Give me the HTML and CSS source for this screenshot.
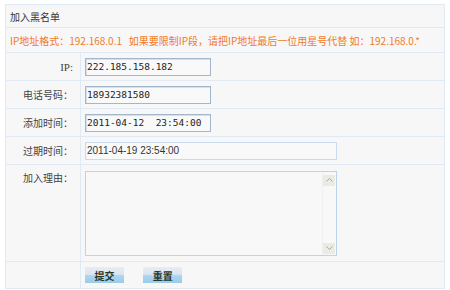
FILE: index.html
```html
<!DOCTYPE html>
<html lang="zh-CN">
<head>
<meta charset="UTF-8">
<title>加入黑名单</title>
<link rel="stylesheet" href="styles.css">
</head>
<body>
<form class="form-box">
  <table class="form">
    <tr class="head"><td colspan="2">加入黑名单</td></tr>
    <tr class="tip"><td colspan="2">IP地址格式：192.168.0.1 &nbsp; 如果要限制IP段，请把IP地址最后一位用星号代替 如：192.168.0.*</td></tr>
    <tr class="row"><th class="serif">IP:</th><td><input class="txt" type="text" value="222.185.158.182"></td></tr>
    <tr class="row"><th>电话号码：</th><td><input class="txt" type="text" value="18932381580"></td></tr>
    <tr class="row"><th>添加时间：</th><td><input class="txt" type="text" value="2011-04-12  23:54:00"></td></tr>
    <tr class="row"><th>过期时间：</th><td><input class="txt readonly" type="text" value="2011-04-19 23:54:00" readonly></td></tr>
    <tr class="reason">
      <th>加入理由：</th>
      <td>
        <div class="area">
          <textarea></textarea>
          <div class="scroll">
            <span><svg width="7" height="4" viewBox="0 0 7 4"><path d="M0.5 3.5 L3.5 0.5 L6.5 3.5" fill="none" stroke="#a9a9a0" stroke-width="1"/></svg></span>
            <span><svg width="7" height="4" viewBox="0 0 7 4"><path d="M0.5 0.5 L3.5 3.5 L6.5 0.5" fill="none" stroke="#a9a9a0" stroke-width="1"/></svg></span>
          </div>
        </div>
      </td>
    </tr>
    <tr class="btns">
      <th></th>
      <td>
        <button type="button" class="btn">提交</button>
        <button type="reset" class="btn">重置</button>
      </td>
    </tr>
  </table>
</form>
</body>
</html>
```

FILE: styles.css
```css
*{
  box-sizing: border-box;
}
body{
  margin: 4px 5px 0;
  background-color: #fff;
  font: 10px "Noto Sans CJK SC", sans-serif;
  color: #333;
}
.form{
  width: 440px;
  border-collapse: collapse;
  background-color: #f7f7f7;
  border: 1px solid #d6e4f2;
}
.form td,
.form th{
  border: 1px solid #e0eaf5;
  padding: 0 4px;
}
.form th{
  width: 75px;
  padding-right: 7px;
  text-align: right;
  font-weight: normal;
  color: #444;
}
.form th.serif{
  font: 11px "Liberation Serif", serif;
}
.head td{
  height: 23px;
}
.tip td{
  height: 25px;
  color: #f07a28;
}
.row td,
.row th{
  height: 28px;
}
.txt{
  display: block;
  width: 126px;
  height: 18px;
  padding: 0 1px;
  border: 1px solid #a3b7cc;
  box-shadow: inset 1px 1px 0 #d4e0ec;
  background-color: #f9f9f9;
  font: 9.5px "DejaVu Sans Mono", monospace;
  color: #222;
  outline: none;
}
.txt.readonly{
  width: 252px;
  border-color: #c8dbee;
  box-shadow: none;
  font: 10px "Liberation Sans", sans-serif;
  color: #333;
}
.reason th{
  vertical-align: top;
  padding-top: 5px;
}
.reason td{
  height: 97px;
}
.area{
  display: flex;
  width: 252px;
  height: 85px;
  border: 1px solid #bcd3ea;
  background-color: #f8f8f8;
}
.area textarea{
  flex: 1;
  border: 0;
  background: transparent;
  resize: none;
  outline: none;
}
.scroll{
  width: 14px;
  display: flex;
  flex-direction: column;
  justify-content: space-between;
  padding: 3px 1px 1px 0;
  border-left: 1px solid #f0f0ee;
}
.scroll span{
  display: flex;
  align-items: center;
  justify-content: center;
  height: 11px;
  background-color: #ebeae3;
}
.btns td,
.btns th{
  height: 27px;
}
.btn{
  width: 39px;
  height: 16px;
  margin-right: 17px;
  padding: 0;
  border: 0;
  background: linear-gradient(#e6edf3 0%, #dce6ee 45%, #acd4f0 55%, #9ccbea 100%);
  font: bold 10px "Noto Sans CJK SC", sans-serif;
  color: #27382a;
  cursor: pointer;
}
```
